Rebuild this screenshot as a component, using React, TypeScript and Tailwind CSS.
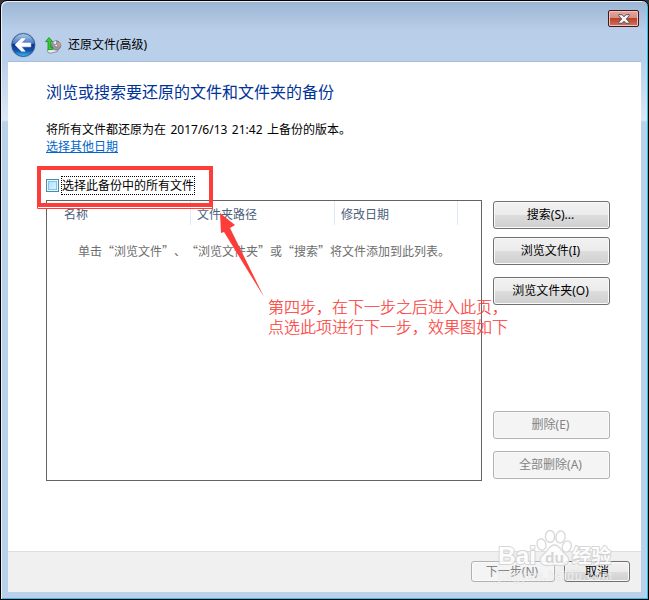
import React from 'react';

type BtnProps = { children: React.ReactNode; className?: string; disabled?: boolean };

function Button({ children, className = '', disabled }: BtnProps) {
  return (
    <button
      className={
        'flex items-center justify-center rounded-[3px] border text-[12px] leading-none shadow-[inset_0_0_0_1px_#fafafa] ' +
        (disabled
          ? 'border-[#adb2b5] bg-[#f4f4f4] text-[#838383] '
          : 'border-[#707070] bg-[linear-gradient(#f2f2f2_0%,#ebebeb_50%,#dddddd_50%,#cfcfcf_100%)] text-black ') +
        className
      }
    >
      {children}
    </button>
  );
}

function BackIcon() {
  return (
    <svg width="26" height="26" viewBox="0 0 26 26">
      <defs>
        <linearGradient id="orb" x1="0" y1="0" x2="0" y2="1">
          <stop offset="0" stopColor="#b4cae8" />
          <stop offset="0.42" stopColor="#4a7dc4" />
          <stop offset="0.48" stopColor="#0d3688" />
          <stop offset="0.75" stopColor="#1553ac" />
          <stop offset="1" stopColor="#3fc3f5" />
        </linearGradient>
      </defs>
      <circle cx="13.3" cy="13" r="12.5" fill="#9fb8d6" />
      <circle cx="13.3" cy="13" r="11.5" fill="url(#orb)" stroke="#2d568f" strokeWidth="0.9" />
      <path d="M5 12.8 L11.5 6.6 H15.2 L11.4 11 H20.8 V14.8 H11.4 L15.2 19.2 H11.5 Z" fill="#fff" stroke="#fff" strokeWidth="0.6" strokeLinejoin="round" />
    </svg>
  );
}

function RestoreIcon() {
  return (
    <svg width="17" height="17" viewBox="0 0 17 17">
      <path d="M2.5 13 L4 10.5 L13 9 L12.5 14.5 L5 16.3 L2.8 15.2 Z" fill="#e9ecef" stroke="#7c8288" strokeWidth="0.8" />
      <circle cx="11.2" cy="8.4" r="4.6" fill="#9d99a3" stroke="#6b6870" strokeWidth="0.8" />
      <path d="M11.2 8.4 L14.6 5 A4.6 4.6 0 0 1 15.6 9.2Z" fill="#cf9692" />
      <path d="M11.2 8.4 L8 5.2 L11 3.8Z" fill="#e5e6ef" />
      <circle cx="11.2" cy="8.6" r="1.3" fill="#fff" stroke="#555" strokeWidth="0.6" />
      <path d="M4 0.6 L7.6 4.6 H5.8 V10.4 H7.8 V12.6 H3 V4.6 H0.5 Z" fill="#34cf35" stroke="#16851f" strokeWidth="0.8" />
    </svg>
  );
}

function Watermark() {
  return (
    <svg width="130" height="60" viewBox="0 0 130 60" className="pointer-events-none absolute top-[528px] left-[495px]">
      <g fill="#fff" fillOpacity="0.8" stroke="#dadada" strokeWidth="1.4">
        <ellipse cx="46.5" cy="16.5" rx="4.4" ry="5.8" transform="rotate(-15 46.5 16.5)" />
        <ellipse cx="55" cy="8.5" rx="4.6" ry="6" />
        <ellipse cx="65.5" cy="9" rx="4.6" ry="6" transform="rotate(10 65.5 9)" />
        <ellipse cx="71.8" cy="18.5" rx="4.4" ry="5.8" transform="rotate(20 71.8 18.5)" />
        <path d="M59.5 17 C54 17 53 23 49 26 C45 29 44 33 47 36 C50 39 55 37 59.5 37 C64 37 69 39 72 36 C75 33 74 29 70 26 C66 23 65 17 59.5 17Z" />
      </g>
      <g className="font-['Liberation_Sans','Noto_Sans_CJK_SC',sans-serif] font-bold" opacity="0.85" fill="#fff" stroke="#cfcfcf" strokeWidth="2" paintOrder="stroke" strokeLinejoin="round">
        <text x="3" y="36" fontSize="24" textLength="38" lengthAdjust="spacingAndGlyphs">Bai</text>
        <text x="50" y="35" fontSize="15" textLength="19" lengthAdjust="spacingAndGlyphs" fill="#cfcfcf" stroke="none">du</text>
        <text x="77" y="35" fontSize="19.5" textLength="39">经验</text>
      </g>
      <text x="3" y="51.5" fontSize="12" textLength="114" className="font-['Liberation_Sans',sans-serif]" fill="#fff" fillOpacity="0.65" stroke="#c8c8c8" strokeOpacity="0.35" strokeWidth="1" paintOrder="stroke">jingyan.baidu.com</text>
    </svg>
  );
}

export default function App() {
  return (
    <div className="relative h-[600px] w-[649px] overflow-hidden bg-[#343238] font-['Noto_Sans','Noto_Sans_CJK_SC',sans-serif] text-[12px] text-black">
      <div className="flex h-[600px] flex-col rounded-t-[7px] border border-black bg-[linear-gradient(#9ab5d3_0px,#b9cfe9_30px,#b9d0eb_60px,#dce7f4_119px,#b9d1ea_121px,#b9d1ea_100%)] pr-[7px] pl-[6px] shadow-[inset_1px_1px_0_#e8f1fa,inset_-1px_-1px_0_#25c4e8]">
        <header className="relative h-[61px] shrink-0">
          <div className="flex items-center pt-[31px] pl-[3px]">
            <BackIcon />
            <div className="ml-[9px]"><RestoreIcon /></div>
            <span className="ml-[6px] text-[12px] leading-4">还原文件(高级)</span>
          </div>
          <button className="absolute top-[9px] right-[2px] flex h-[17px] w-[31px] items-center justify-center rounded-[2px] border border-[#431722] bg-[linear-gradient(#e5a79f_0%,#d98c80_48%,#b8422c_50%,#d4735c_100%)] shadow-[inset_0_0_0_1px_#efc4bb]">
            <svg width="12" height="10" viewBox="0 0 12 10"><path d="M.7.7H4L6 2.8 8 .7h3.3v1L8.3 5l3 3.3v1H8L6 7.2 4 9.3H.7v-1l3-3.3-3-3.3Z" fill="#f4f4f5" stroke="#535767" /></svg>
          </button>
        </header>
        <div className="mb-[7px] ml-px flex min-h-0 flex-1 flex-col bg-white shadow-[0_-1px_0_#a7bcd8]">
          <main className="flex-1 pr-[31px] pl-[38px]">
            <h1 className="pt-[18px] text-[16px] leading-6 text-[#003399]">浏览或搜索要还原的文件和文件夹的备份</h1>
            <p className="mt-[18px] leading-4 [word-spacing:1.3px]">将所有文件都还原为在 2017/6/13 21:42 上备份的版本。</p>
            <a className="mt-px block leading-4 text-[#0066cc] underline">选择其他日期</a>
            <label className="mt-[21px] flex h-[19px] items-center">
              <span className="h-[13px] w-[13px] border border-[#5586a3] bg-[linear-gradient(135deg,#b0dcf8,#e8f6fd)] shadow-[inset_0_0_0_1px_#def9fa,inset_0_0_0_2px_#79c6f9]" />
              <span className="ml-[2px] border border-dotted border-black leading-[17px]">选择此备份中的所有文件</span>
            </label>
            <div className="mt-[5px] flex justify-between">
              <section className="h-[281px] w-[436px] border border-[#646464]">
                <div className="flex h-[24px] text-[#4c607a]">
                  <span className="w-[144px] border-r border-[#e0eaf6] pt-[5px] pl-[17px]">名称</span>
                  <span className="w-[144px] border-r border-[#e0eaf6] pt-[5px] pl-[6px]">文件夹路径</span>
                  <span className="w-[123px] border-r border-[#e0eaf6] pt-[5px] pl-[6px]">修改日期</span>
                </div>
                <p className="mt-[18px] pl-[31px] font-['Noto_Sans_CJK_SC',sans-serif] leading-4 whitespace-nowrap text-[#6d6d6d] [font-feature-settings:'fwid'] [text-spacing-trim:space-all]">单击“浏览文件”、“浏览文件夹”或“搜索”将文件添加到此列表。</p>
              </section>
              <aside className="flex w-[117px] flex-col">
                <Button className="mt-px h-[28px] pr-[2px]">搜索(S)...</Button>
                <Button className="mt-[8px] h-[28px] pr-[2px]">浏览文件(I)</Button>
                <Button className="mt-[12px] h-[28px] pr-[2px]">浏览文件夹(O)</Button>
                <Button disabled className="mt-[106px] h-[28px] pr-[2px]">删除(E)</Button>
                <Button disabled className="mt-[12px] h-[28px] pr-[2px]">全部删除(A)</Button>
              </aside>
            </div>
          </main>
          <footer className="flex h-[41px] shrink-0 justify-end gap-[9px] border-t border-[#dfdfdf] bg-[#f0f0f0] pt-[9px] pr-[11px]">
            <Button disabled className="h-[21px] w-[84px] pr-[2px]">下一步(N)</Button>
            <Button className="h-[21px] w-[66px]">取消</Button>
          </footer>
        </div>
      </div>
      <Watermark />
      <svg width="649" height="600" className="pointer-events-none absolute top-0 left-0">
        <path d="M37.5 207.5h175" stroke="#fff" />
        <path d="M39 168h172v37H39Z" fill="none" stroke="#fc3d39" strokeWidth="4" />
        <path d="M37.5 206v2.5h175v-2.5" fill="none" stroke="#fc3d39" />
        <path d="M220 213 L235 225 L230 228 L264 297 L224 232 L221 233Z" fill="#fc3d39" />
      </svg>
      <p className="absolute top-[296px] left-[268px] font-['Noto_Sans_CJK_SC',sans-serif] text-[16px] leading-5 font-light whitespace-nowrap text-[#fc3d39] [-webkit-text-stroke:0.2px_#fc3d39]">第四步，在下一步之后进入此页，<br />点选此项进行下一步，效果图如下</p>
    </div>
  );
}
